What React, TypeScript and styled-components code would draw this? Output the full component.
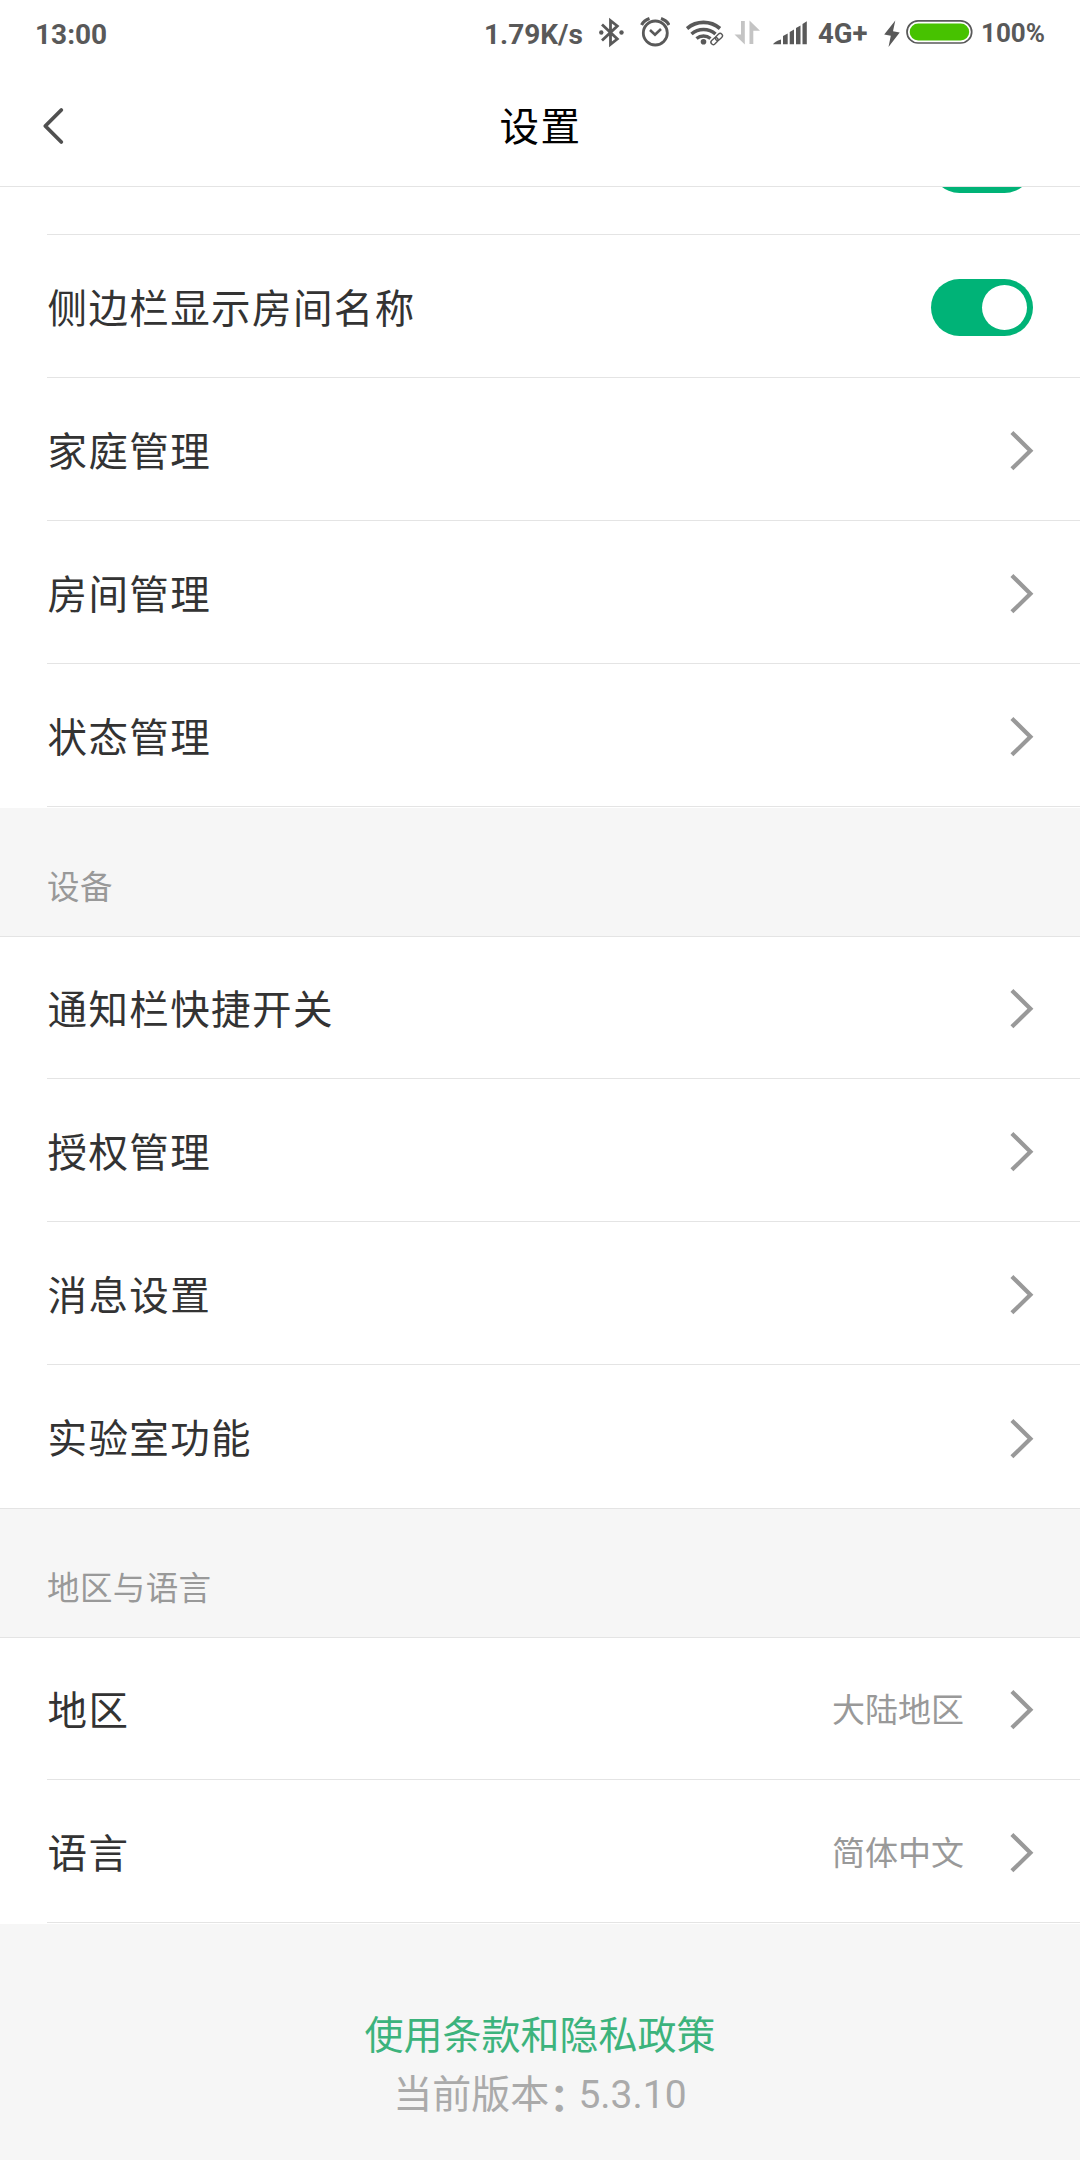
import React from "react";
import styled, { createGlobalStyle } from "styled-components";

const LINE = "#e4e4e4";

const GlobalStyle = createGlobalStyle`
  *, *::before, *::after { box-sizing: border-box; }
  body {
    margin: 0;
    background: #fff;
    font-family: Roboto, "Noto Sans CJK SC", sans-serif;
  }
`;

const Screen = styled.div`
  display: flex;
  flex-direction: column;
  width: 1080px;
  height: 2160px;
  overflow: hidden;
  background: #f6f6f6;
`;

const StatusBar = styled.div`
  display: flex;
  align-items: flex-start;
  height: 66px;
  padding: 0 35px;
  background: #fff;
  color: #595959;
`;

const StatusText = styled.span<{ $width: number; $size?: number; $top?: number }>`
  flex: none;
  width: ${(p) => p.$width}px;
  margin-top: ${(p) => p.$top ?? 19}px;
  font-size: ${(p) => p.$size ?? 28}px;
  font-weight: 700;
  line-height: 32px;
  white-space: nowrap;
`;

const Spacer = styled.span`
  flex: 1;
`;

const StatusIcon = styled.svg<{ $gap: number }>`
  flex: none;
  display: block;
  height: 66px;
  margin-right: ${(p) => p.$gap}px;
`;

const Header = styled.header`
  display: grid;
  grid-template-columns: 120px 1fr 120px;
  align-items: center;
  height: 121px;
  border-bottom: 1px solid ${LINE};
  background: #fff;
`;

const BackButton = styled.button`
  display: flex;
  align-items: center;
  height: 120px;
  padding: 0 0 0 40px;
  border: 0;
  background: none;
`;

const Title = styled.h1`
  margin: 0;
  padding: 4px 0 0 1px;
  color: #000;
  font-size: 39.5px;
  font-weight: 400;
  letter-spacing: 1.4px;
  line-height: 60px;
  text-align: center;
`;

const Viewport = styled.main`
  flex: 1;
  overflow: hidden;
`;

const List = styled.div`
  margin-top: -95px;
`;

const Group = styled.section<{ $tail?: boolean }>`
  padding-bottom: ${(p) => (p.$tail ? 1 : 0)}px;
  background: #fff;
`;

const Row = styled.div<{ $height?: number; $line?: boolean }>`
  display: flex;
  align-items: center;
  height: ${(p) => p.$height ?? 143}px;
  margin-left: 47px;
  padding: ${(p) => (p.$height ? 1 : 2)}px 47px 0 0;
  border-bottom: ${(p) => (p.$line === false ? "0" : `1px solid ${LINE}`)};
`;

const Label = styled.span`
  flex: 1;
  padding: 5px 0 0 0.5px;
  color: #333;
  font-size: 39.5px;
  letter-spacing: 1.4px;
  line-height: 60px;
`;

const Value = styled.span`
  margin-right: 45px;
  padding-top: 3px;
  color: #999;
  font-size: 33px;
  line-height: 50px;
`;

const SectionTitle = styled.h2<{ $topLine?: boolean; $height: number }>`
  display: flex;
  align-items: flex-end;
  height: ${(p) => p.$height}px;
  margin: 0;
  padding: 0 47px 23px;
  border-top: ${(p) => (p.$topLine ? `1px solid ${LINE}` : "0")};
  border-bottom: 1px solid ${LINE};
  color: #999;
  font-size: 32.5px;
  font-weight: 400;
  letter-spacing: 0.4px;
  line-height: 50px;
`;

const Track = styled.span`
  display: flex;
  align-items: center;
  justify-content: flex-end;
  width: 102px;
  height: 57px;
  padding: 0 6px;
  border-radius: 29px;
  background: #00b377;
`;

const Knob = styled.span`
  width: 45px;
  height: 45px;
  border-radius: 50%;
  background: #fff;
`;

const Footer = styled.footer`
  display: flex;
  flex-direction: column;
  align-items: center;
  padding-top: 83px;
  font-size: 39px;
  line-height: 59px;
`;

const Terms = styled.a`
  color: #3cb37c;
`;

const Version = styled.span`
  color: #aaa;
`;

const Colon = styled.span`
  font-weight: 700;
  letter-spacing: -10px;
  line-height: 1;
  vertical-align: -3px;
`;

const ChevronIcon = styled.svg`
  flex: none;
  overflow: visible;
`;

const Chevron = () => (
  <ChevronIcon width="24" height="40" viewBox="0 0 24 40" fill="none">
    <path d="M4.4 4 L21.4 20.7 L4.4 37.4" stroke="#999" strokeWidth="4.2" strokeLinecap="square" strokeLinejoin="miter" />
  </ChevronIcon>
);

const Toggle = () => (
  <Track>
    <Knob />
  </Track>
);

const Bluetooth = () => (
  <StatusIcon width="26" viewBox="599 0 26 66" $gap={15} fill="none" stroke="#595959" strokeWidth="2.8">
    <path d="M602 24.5 L617.3 39 L610.5 44.3 V20.7 L617.3 26 L602 40.5" strokeLinejoin="miter" />
    <circle cx="601.3" cy="32.5" r="2.2" fill="#595959" stroke="none" />
    <circle cx="621.5" cy="32.5" r="2.2" fill="#595959" stroke="none" />
  </StatusIcon>
);

const Alarm = () => (
  <StatusIcon width="30" viewBox="640 0 30 66" $gap={16} fill="none" stroke="#595959">
    <circle cx="655.3" cy="33" r="12" strokeWidth="2.8" />
    <path d="M650 30 L655 34.7 L661 29" strokeWidth="2.6" />
    <path d="M641.6 25 Q644 20.5 649.5 18.6 M669 25 Q666.5 20.5 661 18.6" strokeWidth="3.2" />
  </StatusIcon>
);

const Wifi = () => (
  <StatusIcon width="38" viewBox="686 0 38 66" $gap={10} fill="none" stroke="#595959">
    <path d="M687 28.5 A25.5 25.5 0 0 1 720 28.5" strokeWidth="3.7" />
    <path d="M691.5 34 A18 18 0 0 1 715.5 34" strokeWidth="3.5" />
    <path d="M696.5 38.5 A11 11 0 0 1 710.5 38.5" strokeWidth="3.3" />
    <circle cx="703.5" cy="41.7" r="2.8" fill="#595959" stroke="none" />
    <g transform="rotate(-43 716.7 39)" strokeWidth="1.4">
      <rect x="709.7" y="36.7" width="8" height="4.6" rx="2.3" />
      <rect x="715.7" y="36.7" width="8" height="4.6" rx="2.3" />
    </g>
  </StatusIcon>
);

const DataArrows = () => (
  <StatusIcon width="26" viewBox="734 0 26 66" $gap={12} fill="#c4c4c4">
    <path d="M741 21 H744.8 V44.5 L734.5 34.5 H741 Z" />
    <path d="M749.5 20.5 L760 30.8 H753.3 V44 H749.5 Z" />
  </StatusIcon>
);

const Signal = () => (
  <StatusIcon width="36" viewBox="772 0 36 66" $gap={10} fill="#595959">
    <path d="M773 44.3 Q774.5 41.5 781 39.5 V44.3 Z" />
    <path d="M783 36 L787.7 33.5 V44.3 H783 Z" />
    <path d="M789.7 32 L794 29.5 V44.3 H789.7 Z" />
    <path d="M796 28 L800.5 25.5 V44.3 H796 Z" />
    <path d="M802.5 24 L806.8 21.3 V44.3 H802.5 Z" />
  </StatusIcon>
);

const Battery = () => (
  <StatusIcon width="90" viewBox="884 0 90 66" $gap={7}>
    <path d="M895.3 20.5 L884.2 34.5 L890.8 35.8 L888.5 47 L899.7 32.5 L893 31.2 Z" fill="#595959" />
    <rect x="907" y="20.8" width="64.7" height="22.2" rx="11.1" fill="#fff" stroke="#595959" strokeWidth="1.7" />
    <rect x="909.7" y="23.6" width="59.5" height="17" rx="8.5" fill="#47c200" />
  </StatusIcon>
);

type Item = { label: string; value?: string; toggle?: boolean; height?: number; line?: boolean };

const homeItems: Item[] = [
  { label: "", toggle: true },
  { label: "侧边栏显示房间名称", toggle: true },
  { label: "家庭管理" },
  { label: "房间管理" },
  { label: "状态管理" },
];

const deviceItems: Item[] = [
  { label: "通知栏快捷开关", height: 142 },
  { label: "授权管理" },
  { label: "消息设置" },
  { label: "实验室功能", line: false },
];

const regionItems: Item[] = [
  { label: "地区", value: "大陆地区", height: 142 },
  { label: "语言", value: "简体中文" },
];

const Rows = ({ items }: { items: Item[] }) => (
  <>
    {items.map((item, i) => (
      <Row key={i} $height={item.height} $line={item.line}>
        <Label>{item.label}</Label>
        {item.value && <Value>{item.value}</Value>}
        {item.toggle ? <Toggle /> : <Chevron />}
      </Row>
    ))}
  </>
);

export default function App() {
  return (
    <Screen>
      <GlobalStyle />
      <StatusBar>
        <StatusText $width={80}>13:00</StatusText>
        <Spacer />
        <StatusText $width={115}>1.79K/s</StatusText>
        <Bluetooth />
        <Alarm />
        <Wifi />
        <DataArrows />
        <Signal />
        <StatusText $width={66} $size={27.5} $top={18}>4G+</StatusText>
        <Battery />
        <StatusText $width={64} $size={26} $top={17}>100%</StatusText>
      </StatusBar>
      <Header>
        <BackButton aria-label="返回">
          <svg width="24" height="40" viewBox="0 0 24 40" fill="none">
            <path d="M21.3 4 L5.3 20 L21.3 36" stroke="#505050" strokeWidth="3.8" strokeLinecap="round" strokeLinejoin="round" />
          </svg>
        </BackButton>
        <Title>设置</Title>
      </Header>
      <Viewport>
        <List>
          <Group $tail>
            <Rows items={homeItems} />
          </Group>
          <SectionTitle $height={129}>设备</SectionTitle>
          <Group>
            <Rows items={deviceItems} />
          </Group>
          <SectionTitle $height={130} $topLine>地区与语言</SectionTitle>
          <Group $tail>
            <Rows items={regionItems} />
          </Group>
          <Footer>
            <Terms>使用条款和隐私政策</Terms>
            <Version>
              当前版本<Colon>：</Colon>5.3.10
            </Version>
          </Footer>
        </List>
      </Viewport>
    </Screen>
  );
}
